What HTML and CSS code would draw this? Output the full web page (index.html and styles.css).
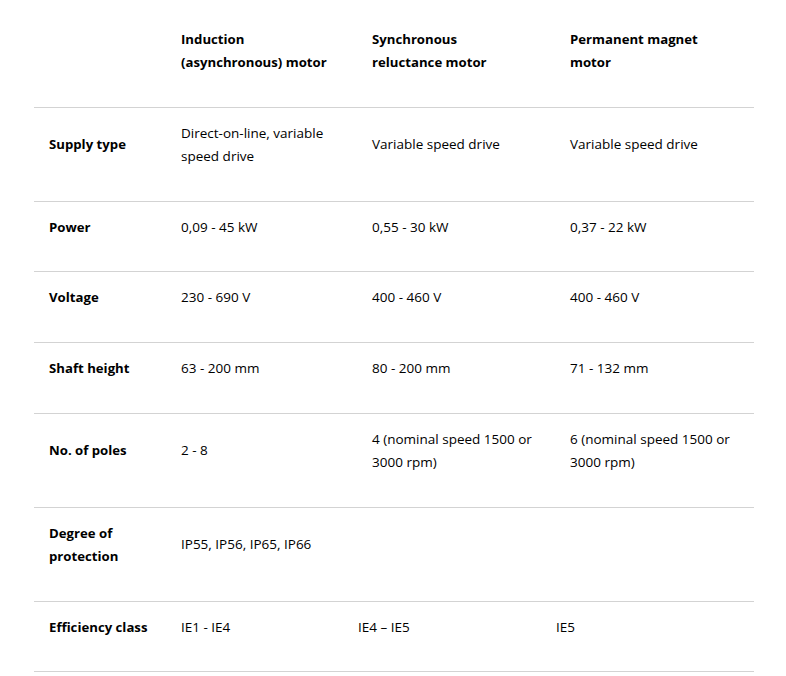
FILE: index.html
```html
<!DOCTYPE html>
<html lang="en">
<head>
<meta charset="utf-8">
<title>Motor comparison</title>
<link rel="stylesheet" href="styles.css">
</head>
<body>
<div class="table">
  <div class="row head">
    <div class="cell"></div>
    <div class="cell">Induction<br>(asynchronous) motor</div>
    <div class="cell">Synchronous<br>reluctance motor</div>
    <div class="cell">Permanent magnet<br>motor</div>
  </div>
  <div class="row">
    <div class="cell label">Supply type</div>
    <div class="cell">Direct-on-line, variable speed drive</div>
    <div class="cell">Variable speed drive</div>
    <div class="cell">Variable speed drive</div>
  </div>
  <div class="row">
    <div class="cell label">Power</div>
    <div class="cell">0,09 - 45 kW</div>
    <div class="cell">0,55 - 30 kW</div>
    <div class="cell">0,37 - 22 kW</div>
  </div>
  <div class="row">
    <div class="cell label">Voltage</div>
    <div class="cell">230 - 690 V</div>
    <div class="cell">400 - 460 V</div>
    <div class="cell">400 - 460 V</div>
  </div>
  <div class="row">
    <div class="cell label">Shaft height</div>
    <div class="cell">63 - 200 mm</div>
    <div class="cell">80 - 200 mm</div>
    <div class="cell">71 - 132 mm</div>
  </div>
  <div class="row">
    <div class="cell label">No. of poles</div>
    <div class="cell">2 - 8</div>
    <div class="cell">4 (nominal speed 1500 or 3000 rpm)</div>
    <div class="cell">6 (nominal speed 1500 or 3000 rpm)</div>
  </div>
  <div class="row">
    <div class="cell label">Degree of protection</div>
    <div class="cell">IP55, IP56, IP65, IP66</div>
    <div class="cell"></div>
    <div class="cell"></div>
  </div>
  <div class="row">
    <div class="cell label">Efficiency class</div>
    <div class="cell">IE1 - IE4</div>
    <div class="cell flush">IE4 – IE5</div>
    <div class="cell flush">IE5</div>
  </div>
</div>
</body>
</html>
```
FILE: styles.css
```css
html, body {
  margin: 0;
  padding: 0;
  background: #ffffff;
}

body {
  font-family: "Open Sans", "Noto Sans", sans-serif;
  font-size: 13.5px;
  line-height: 23px;
  color: #000000;
}

.table {
  width: 720px;
  margin: 14px 0 0 34px;
}

.row {
  display: grid;
  grid-template-columns: 133px 191px 198px 198px;
  align-items: center;
  padding: 14px 0 32.8px;
  border-bottom: 1px solid #d3d3d3;
}

.cell {
  padding: 0 14px;
}

.head .cell,
.label {
  font-weight: 700;
  font-size: 13.2px;
}

.label {
  padding-left: 15px;
}

.flush {
  padding-left: 0;
}
```
